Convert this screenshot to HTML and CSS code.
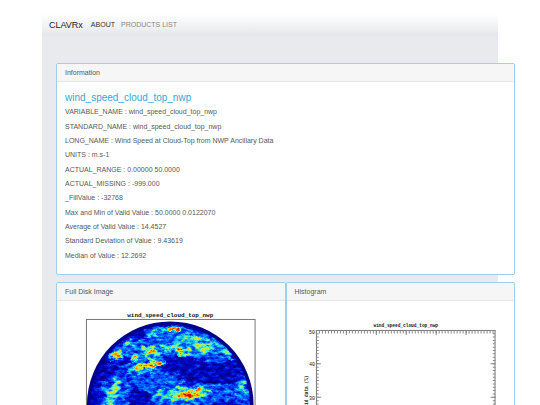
FILE: index.html
```html
<!DOCTYPE html>
<html lang="en">

<head>
    <meta charset="UTF-8">
    <meta name="viewport" content="width=device-width, initial-scale=1.0">
    <title>CLAVRx</title>
    <link rel="stylesheet" href="styles.css">
</head>

<body>
    <div class="container">
        <nav class="navbar">
            <a class="brand" href="#">CLAVRx</a>
            <a class="nav-link active" href="#">ABOUT</a>
            <a class="nav-link" href="#">PRODUCTS LIST</a>
        </nav>

        <div class="content">
            <div class="card">
                <div class="card-header">Information</div>
                <div class="card-body info">
                    <h4 class="card-title">wind_speed_cloud_top_nwp</h4>
                    <ul class="attributes">
                        <li>VARIABLE_NAME : wind_speed_cloud_top_nwp</li>
                        <li>STANDARD_NAME : wind_speed_cloud_top_nwp</li>
                        <li>LONG_NAME : Wind Speed at Cloud-Top from NWP Ancillary Data</li>
                        <li>UNITS : m.s-1</li>
                        <li>ACTUAL_RANGE : 0.00000 50.0000</li>
                        <li>ACTUAL_MISSING : -999.000</li>
                        <li>_FillValue : -32768</li>
                        <li>Max and Min of Valid Value : 50.0000 0.0122070</li>
                        <li>Average of Valid Value : 14.4527</li>
                        <li>Standard Deviation of Value : 9.43619</li>
                        <li>Median of Value : 12.2692</li>
                    </ul>
                </div>
            </div>

            <div class="row">
                <div class="card">
                    <div class="card-header">Full Disk Image</div>
                    <svg class="figure" viewBox="0 0 228 206" role="img" aria-label="Full disk image">
                        <defs>
                            <clipPath id="disk">
                                <circle cx="113.5" cy="104" r="80" />
                            </clipPath>
                            <!-- grey level to jet colours, roughened by noise -->
                            <filter id="jet" filterUnits="userSpaceOnUse" x="20" y="10" width="190" height="190" color-interpolation-filters="sRGB">
                                <feTurbulence type="fractalNoise" baseFrequency="0.1 0.18" numOctaves="5" seed="8" result="warp" />
                                <feGaussianBlur in="SourceGraphic" stdDeviation="1" result="soft" />
                                <feDisplacementMap in="soft" in2="warp" scale="13" xChannelSelector="R" yChannelSelector="G" result="clouds" />
                                <feTurbulence type="fractalNoise" baseFrequency="0.16 0.3" numOctaves="5" seed="21" />
                                <feColorMatrix values="1 0 0 0 0  1 0 0 0 0  1 0 0 0 0  0 0 0 0 1" result="grain" />
                                <feComposite in="clouds" in2="grain" operator="arithmetic" k1="0.9" k2="0.5" k3="0.35" k4="-0.16" />
                                <feComponentTransfer>
                                    <feFuncR type="table" tableValues="0 0 0 0.05 0.3 0.8 1 1 0.8" />
                                    <feFuncG type="table" tableValues="0 0.04 0.3 0.7 0.95 0.95 0.7 0.3 0" />
                                    <feFuncB type="table" tableValues="0.5 0.82 1 1 0.75 0.2 0 0 0" />
                                    <feFuncA type="linear" slope="0" intercept="1" />
                                </feComponentTransfer>
                            </filter>
                        </defs>
                        <text class="plot-title" x="113.5" y="16">wind_speed_cloud_top_nwp</text>
                        <rect class="frame" x="29.5" y="18.5" width="169" height="171" />
                        <circle cx="113.5" cy="104" r="83.5" fill="#000088" />
                        <g clip-path="url(#disk)">
                            <g filter="url(#jet)" fill="#fff">
                                <rect x="20" y="10" width="190" height="190" fill="#141414" />
                                <g fill-opacity="0.19">
                                    <ellipse cx="130" cy="36" rx="46" ry="8" transform="rotate(8 130 36)" />
                                    <ellipse cx="90" cy="48" rx="34" ry="11" />
                                    <ellipse cx="145" cy="49" rx="32" ry="11" transform="rotate(12 145 49)" />
                                    <ellipse cx="84" cy="65" rx="26" ry="5" transform="rotate(-12 84 65)" />
                                    <ellipse cx="58" cy="92" rx="15" ry="20" transform="rotate(25 58 92)" />
                                    <ellipse cx="104" cy="83" rx="32" ry="14" transform="rotate(20 104 83)" />
                                    <ellipse cx="138" cy="95" rx="45" ry="12" transform="rotate(-6 138 95)" />
                                    <ellipse cx="186" cy="92" rx="8" ry="20" />
                                    <ellipse cx="120" cy="125" rx="60" ry="14" />
                                    <ellipse cx="100" cy="155" rx="50" ry="13" />
                                </g>
                                <g fill-opacity="0.34">
                                    <ellipse cx="110" cy="28" rx="17" ry="3" transform="rotate(-12 110 28)" />
                                    <ellipse cx="140" cy="37" rx="20" ry="2" transform="rotate(10 140 37)" />
                                    <ellipse cx="70" cy="43" rx="7" ry="3" />
                                    <ellipse cx="93" cy="51" rx="9" ry="5" />
                                    <ellipse cx="110" cy="46" rx="9" ry="3" />
                                    <ellipse cx="126" cy="51" rx="7" ry="5" />
                                    <ellipse cx="148" cy="48" rx="12" ry="4" />
                                    <ellipse cx="171" cy="52" rx="3" ry="9" transform="rotate(-35 171 52)" />
                                    <ellipse cx="80" cy="57" rx="6" ry="4" />
                                    <ellipse cx="60" cy="55" rx="7" ry="3" />
                                    <ellipse cx="90" cy="65" rx="20" ry="3" transform="rotate(-14 90 65)" />
                                    <ellipse cx="56" cy="92" rx="6" ry="14" transform="rotate(20 56 92)" />
                                    <ellipse cx="132" cy="94" rx="20" ry="6" transform="rotate(-8 132 94)" />
                                    <ellipse cx="186" cy="85" rx="3" ry="7" />
                                    <ellipse cx="110" cy="130" rx="26" ry="5" />
                                </g>
                                <g fill-opacity="0.6">
                                    <ellipse cx="118" cy="27" rx="7" ry="2" />
                                    <ellipse cx="60" cy="55" rx="7" ry="2" />
                                    <ellipse cx="80" cy="58" rx="3" ry="2" />
                                    <ellipse cx="93" cy="51" rx="5" ry="2" />
                                    <ellipse cx="125" cy="51" rx="4" ry="3" />
                                    <ellipse cx="99" cy="63" rx="11" ry="2" />
                                    <ellipse cx="84" cy="67" rx="6" ry="2" />
                                    <ellipse cx="134" cy="93" rx="14" ry="3" transform="rotate(-10 134 93)" />
                                </g>
                            </g>
                        </g>
                    </svg>
                </div>

                <div class="card">
                    <div class="card-header">Histogram</div>
                    <!-- drawn at twice its size on the page -->
                    <svg class="figure" viewBox="0 0 456 412" role="img" aria-label="Histogram">
                        <text class="hist-title" x="238" y="52">wind_speed_cloud_top_nwp</text>
                        <rect class="axis" x="59" y="59" width="358" height="336" />
                        <g class="ticks">
                            <path stroke-width="6" stroke-dasharray="2 4" d="M58 62H418M58 392H418" />
                            <path stroke-width="5" stroke-dasharray="2 4.7" d="M61 58V396M415 58V396" />
                            <path stroke-width="10" stroke-dasharray="2 58" d="M58 63H418" />
                            <path stroke-width="10" stroke-dasharray="2 65" d="M63 58V396M413 58V396" />
                        </g>
                        <g class="tick-label">
                            <text x="56" y="66">50</text>
                            <text x="56" y="131">40</text>
                            <text x="56" y="198">30</text>
                            <text x="56" y="265">20</text>
                            <text x="56" y="332">10</text>
                            <text x="56" y="399">0</text>
                        </g>
                        <text class="hist-title" transform="translate(43 187) rotate(-90)">Valid data (%)</text>
                    </svg>
                </div>
            </div>
        </div>
    </div>
</body>

</html>
```

FILE: styles.css
```css
* {
    margin: 0;
    padding: 0;
    box-sizing: border-box;
}

body {
    font-family: "Liberation Sans", Arial, sans-serif;
    font-size: 7px;
    line-height: 10px;
    color: #55595c;
    background-color: #fff;
}

a {
    text-decoration: none;
}

li {
    list-style-type: none;
}

.container {
    margin: 14px 42px 0;
    background-color: #e8eaee;
}

.navbar {
    display: flex;
    align-items: center;
    gap: 6px;
    height: 22px;
    padding: 0 7px;
    background-image: linear-gradient(#fff, #e4e7ea);
}

.brand {
    margin-right: 2px;
    font-size: 9px;
    color: #222;
}

.nav-link {
    color: #85888b;
}

.nav-link.active {
    color: #333;
}

/* the cards run out past the right edge of the container */
.content {
    display: flex;
    flex-direction: column;
    gap: 7px;
    margin-right: -17px;
    padding: 27px 0 14px 14px;
}

.row {
    display: grid;
    grid-template-columns: 1fr 1fr;
}

.card {
    border: 1px solid #9fd0e8;
    border-radius: 2px;
    background-color: #fff;
    overflow: hidden;
}

.card-header {
    height: 18px;
    padding: 4px 8px;
    border-bottom: 1px solid #e4e6e8;
    background-color: #f6f6f6;
}

.card-body {
    padding: 8px;
}

.card-title {
    font-size: 10px;
    font-weight: normal;
    line-height: 14px;
    color: #3aa3d8;
}

.attributes {
    display: grid;
    grid-auto-rows: 1fr;
    align-items: center;
    height: 158px;
}

.info {
    padding-top: 9px;
    padding-bottom: 11px;
}

.figure {
    display: block;
    width: 100%;
}

.frame,
.axis {
    fill: none;
    stroke: #777;
}

.axis {
    stroke-width: 2;
}

.ticks {
    fill: none;
    stroke: #888;
}

.plot-title,
.hist-title,
.tick-label {
    font-family: "Liberation Mono", "Courier New", monospace;
    font-weight: bold;
    fill: #111;
}

.plot-title {
    font-size: 6px;
    text-anchor: middle;
}

.hist-title {
    font-size: 9px;
    text-anchor: middle;
}

.tick-label {
    font-size: 10px;
    font-weight: normal;
    text-anchor: end;
}
```
